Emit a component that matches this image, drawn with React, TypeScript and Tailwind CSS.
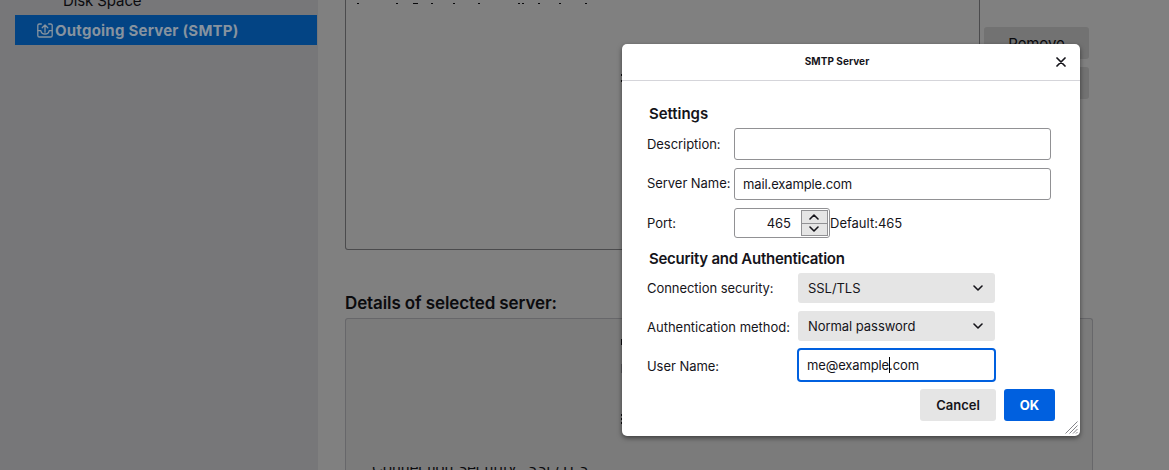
import React from "react";

function Chevron({ up = false }: { up?: boolean }) {
  return (
    <svg width="10" height="6" viewBox="0 0 10 6" fill="none" stroke="#15141a" strokeWidth="1.6" strokeLinecap="round" strokeLinejoin="round">
      <path d={up ? "M1 5L5 1L9 5" : "M1 1L5 5L9 1"} />
    </svg>
  );
}

function Outbox() {
  return (
    <svg width="16" height="15" viewBox="0 0 16 15" fill="none" stroke="#87939f" strokeWidth="1.3" strokeLinecap="round" strokeLinejoin="round">
      <path d="M4.3 1H2.4C1.4 1 .8 1.6 .8 2.6V12.4C.8 13.4 1.4 14 2.4 14H13.6C14.6 14 15.2 13.4 15.2 12.4V2.6C15.2 1.6 14.6 1 13.6 1H11.7" />
      <path d="M8 9.2V2.5M5.2 4.8L8 2L10.8 4.8M1 7.6H3.8C4.2 10 5.8 11 8 11S11.8 10 12.2 7.6H15" />
    </svg>
  );
}

function Select({ value }: { value: string }) {
  return (
    <div className="flex h-[30px] w-[197px] items-center justify-between rounded-[3px] bg-[#e5e5e5] pr-3 pl-[10px]">
      <span>{value}</span>
      <Chevron />
    </div>
  );
}

function Backdrop() {
  return (
    <div className="flex h-full">
      <aside className="h-full w-[318px] shrink-0 bg-[#777779] pl-[15px]">
        <div className="flex h-[15px] items-end pl-[48px] text-[15px] leading-[26px] text-[#0b0b0e]">
          <span className="mb-px tracking-[-0.1px]">Disk Space</span>
        </div>
        <div className="flex h-[30px] w-[302px] items-center bg-[#034484] pl-[22px] text-[15px] font-bold text-[#87939f]">
          <Outbox />
          <span className="ml-[2px] pt-[2px] tracking-[0.23px]">Outgoing Server (SMTP)</span>
        </div>
      </aside>
      <main className="flex h-full flex-1 flex-col pl-[27px]">
        <div className="flex h-[250px]">
          <div className="h-[250px] w-[635px] rounded-b-[3px] border border-t-0 border-[#4b4b4d]">
            <svg width="300" height="8" viewBox="0 0 300 8" fill="#09090b">
              <path d="M11 3h2v1h-2zM50 3h2v1h-2zM67 3h5v1h-5zM85 3h2v1h-2zM107 3h2v1h-2zM132 3h2v1h-2zM172 3h2v1h-2zM176 3h2v1h-2zM192 3h2v1h-2zM213 3h2v1h-2zM239 3h2v1h-2z" />
            </svg>
          </div>
          <div className="ml-1 flex flex-col gap-2 pt-[27px]">
            <div className="flex h-8 w-[105px] items-center justify-center rounded-[3px] bg-[#727272] pt-[2px] text-[15px] tracking-[-0.1px] text-[#0b0b0e]">
              Remove
            </div>
            <div className="h-8 w-[105px] rounded-[3px] bg-[#727272]" />
          </div>
        </div>
        <h2 className="mt-[40px] h-[28px] text-[17px] leading-[26px] font-semibold tracking-[-0.11px] text-[#0b0b0e]">Details of selected server:</h2>
        <div className="flex w-[748px] flex-1 flex-col justify-end rounded-t-[3px] border border-b-0 border-[#67676a] bg-[#7b7b7b]">
          <div className="flex h-[3px] items-center overflow-hidden pl-[26px] text-[15px] whitespace-nowrap text-[#0b0b0e]">
            <span className="w-[155px]">Connection Security:</span>
            <span>SSL/TLS</span>
          </div>
        </div>
      </main>
    </div>
  );
}

function Dialog() {
  return (
    <section className="absolute top-[44px] left-[622px] flex h-[392px] w-[458px] flex-col rounded-[5px] bg-white text-[13px] leading-[18px] tracking-[-0.05px] text-[#15141a] shadow-[0_2px_5px_rgba(0,0,0,0.5)]">
      <header className="flex h-[37px] items-center border-b border-[#d5d5da] pr-[14px]">
        <h1 className="flex-1 pb-[2px] text-center text-[10px] font-bold tracking-[0.05px]">
          <span className="pr-[4px]">SMTP Server</span>
        </h1>
        <svg width="10" height="10" viewBox="0 0 10 10" fill="none" stroke="#15141a" strokeWidth="1.7" strokeLinecap="round">
          <path d="M1 1L9 9M9 1L1 9" />
        </svg>
      </header>
      <div className="flex flex-col pl-[25px]">
        <h2 className="mt-[24px] h-[23px] pl-[2px] text-[15px] leading-[18px] font-semibold">Settings</h2>
        <div className="flex h-8 items-center">
          <label className="w-[87px]">Description:</label>
          <div className="h-8 w-[317px] rounded-[3px] border border-[#919194]" />
        </div>
        <div className="mt-2 flex h-8 items-center">
          <label className="w-[87px] pb-[2px] whitespace-nowrap">Server Name:</label>
          <div className="flex h-8 w-[317px] items-center rounded-[3px] border border-[#919194] pl-2 tracking-[-0.12px]">mail.example.com</div>
        </div>
        <div className="mt-2 flex h-[30px] items-center">
          <label className="w-[87px]">Port:</label>
          <div className="flex h-[30px] w-[96px] items-center justify-end rounded-[3px] border border-[#919194] pr-px">
            <span className="mr-[10px] tracking-normal">465</span>
            <div className="flex h-[26px] w-[27px] flex-col border border-[#919194] bg-[#e5e5e5]">
              <div className="flex flex-1 items-center justify-center border-b border-[#919194] pr-px"><Chevron up /></div>
              <div className="flex flex-1 items-center justify-center pr-px"><Chevron /></div>
            </div>
          </div>
          <span className="tracking-normal">Default:465</span>
        </div>
        <h2 className="mt-[12px] h-[23px] pl-[2px] text-[15px] leading-[18px] font-semibold tracking-[-0.26px]">Security and Authentication</h2>
        <div className="flex h-[30px] items-center">
          <label className="w-[151px]">Connection security:</label>
          <Select value="SSL/TLS" />
        </div>
        <div className="mt-2 flex h-[30px] items-center">
          <label className="w-[151px] pt-[2px] whitespace-nowrap tracking-normal">Authentication method:</label>
          <Select value="Normal password" />
        </div>
        <div className="mt-[7px] flex h-[34px] items-center">
          <label className="w-[150px] pt-[2px]">User Name:</label>
          <div className="flex h-[34px] w-[199px] items-center rounded-[4px] border-2 border-[#0060df] pl-2 tracking-[-0.12px]">
            <span>me@example</span>
            <span className="-mr-px h-4 w-px bg-black" />
            <span>.com</span>
          </div>
        </div>
      </div>
      <footer className="mt-[7px] flex justify-end gap-2 pr-[25px] font-semibold tracking-normal">
        <button className="h-8 w-[76px] rounded-[3px] bg-[#e5e5e5]">Cancel</button>
        <button className="h-8 w-[51px] rounded-[3px] bg-[#0060df] font-bold text-white">OK</button>
      </footer>
      <svg className="absolute right-[2px] bottom-[2px]" width="13" height="13" viewBox="0 0 13 13" stroke="#85858a" strokeWidth="1">
        <path d="M.5 12.5L12.5 .5M4.5 12.5L12.5 4.5M8 12.5L12.5 8M11 12.5L12.5 11" />
      </svg>
    </section>
  );
}

export default function App() {
  return (
    <div className="relative h-[470px] w-[1169px] overflow-hidden bg-[#808080] font-['Inter',sans-serif]">
      <Backdrop />
      <Dialog />
      <svg className="absolute top-[70px] left-[621px]" width="1" height="360" viewBox="0 0 1 360" fill="#09090b">
        <path d="M0 4h1v2h-1zM0 10h1v2h-1zM0 269h1v6h-1zM0 344h1v2h-1zM0 348h1v2h-1zM0 352h1v2h-1z" />
        <path d="M0 294h1v9h-1z" fill="#444446" />
      </svg>
    </div>
  );
}
